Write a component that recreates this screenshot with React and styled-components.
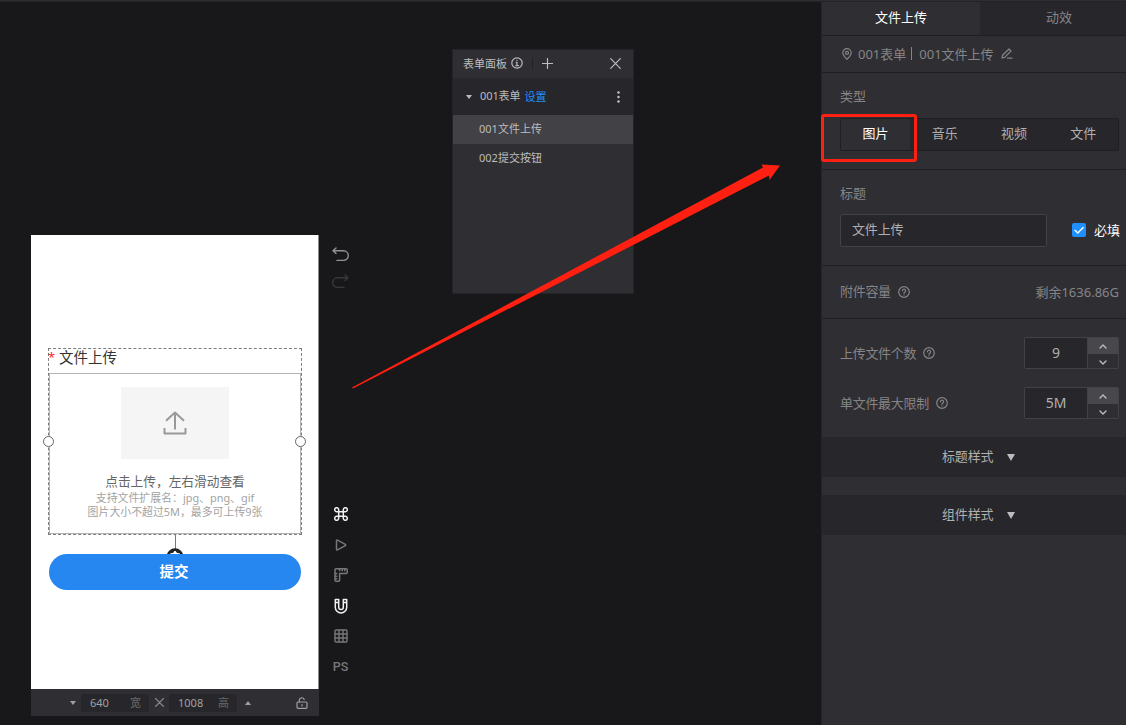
import React from "react";
import styled, { createGlobalStyle } from "styled-components";

const Global = createGlobalStyle`
  * { box-sizing: border-box; }
  html, body { margin: 0; background: #18181a; }
  body { overflow: hidden; font-family: "Noto Sans", "Noto Sans CJK SC", sans-serif; font-size: 13px; line-height: 20px; }
`;

const Page = styled.div`
  position: relative;
  width: 1126px;
  height: 725px;
  display: flex;
  flex-direction: column;
  background: #18181a;
  color: #b0b0b0;
  white-space: nowrap;
`;
const TopBar = styled.div`
  flex: none;
  height: 2px;
  background: linear-gradient(#2f2e33 50%, #232327 50%);
`;
const Workspace = styled.div`
  flex: 1;
  display: flex;
`;
const Stage = styled.main`
  width: 821px;
  display: flex;
  align-items: flex-start;
`;

/* phone preview */
const Preview = styled.section`
  width: 288px;
  margin: 233px 0 0 31px;
`;
const Screen = styled.div`
  height: 454px;
  padding: 113px 16px 0 17px;
  background: #fff;
  border-right: 1px solid #8b8b8b;
`;
const Selection = styled.div`
  position: relative;
  width: 254px;
  height: 187px;
  border: 1px dashed #7d7d7d;
`;
const FieldTitle = styled.div`
  height: 24px;
  font-size: 14.5px;
  line-height: 16px;
  color: #333;
  display: flex;
  gap: 4px;
`;
const Star = styled.span`
  width: 6px;
  margin-left: -1px;
  padding-left: 0;
  color: #ff2a2a;
  font-size: 13px;
`;
const FieldName = styled.span`
  margin-left: 1px;
`;
const UploadBox = styled.div`
  width: 252px;
  height: 161px;
  border: 1px solid #b4b4b4;
  display: flex;
  flex-direction: column;
  align-items: center;
  padding-top: 13px;
`;
const UploadTile = styled.div`
  width: 108px;
  height: 72px;
  padding-right: 1px;
  background: #f5f5f5;
  display: flex;
  align-items: center;
  justify-content: center;
`;
const UploadText = styled.div`
  margin-top: 12px;
  font-size: 12.7px;
  line-height: 20px;
  color: #666;
`;
const Hint = styled.div`
  font-size: 10.9px;
  line-height: 14px;
  color: #a3a3a3;
`;
const Handle = styled.i`
  position: absolute;
  top: 87px;
  ${(p) => (p.$side === "left" ? "left: -6px;" : "right: -5px;")}
  width: 11px;
  height: 11px;
  border: 1px solid #666;
  border-radius: 50%;
  background: #fff;
`;
const Connector = styled.svg`
  display: block;
  margin-left: 117px;
`;
const Submit = styled.div`
  width: 252px;
  height: 36px;
  margin-left: 1px;
  padding-right: 2px;
  border-radius: 18px;
  background: #2787f0;
  color: #fff;
  font-size: 14.5px;
  font-weight: 700;
  line-height: 34px;
  text-align: center;
`;
const SizeBar = styled.footer`
  height: 27px;
  background: #2f2e33;
  display: flex;
  align-items: center;
  padding-left: 39px;
  font-size: 11px;
`;
const SizeBox = styled.div`
  width: 68px;
  height: 18px;
  margin-left: ${(p) => p.$ml || 0}px;
  padding: 0 8px 0 9px;
  background: #27262b;
  border-radius: 2px;
  display: flex;
  justify-content: space-between;
  line-height: 17px;
  color: #a0a0a0;
`;
const Unit = styled.span`
  color: #6a6a6c;
`;
const Times = styled.span`
  width: 20px;
  display: flex;
  justify-content: center;
  color: #858587;
`;
const CaretSlot = styled.span`
  width: 22px;
  display: flex;
  justify-content: center;
`;
const Lock = styled.span`
  margin-left: 37px;
  display: flex;
  color: #a0a0a0;
`;
const Caret = styled.i`
  width: 0;
  height: 0;
  margin-top: ${(p) => p.$mt || 0}px;
  border: ${(p) => p.$size || 3}px solid transparent;
  ${(p) =>
    p.$up
      ? `border-top: 0; border-bottom: 4px solid #a0a0a0;`
      : `border-bottom: 0; border-top: ${p.$h || 4}px solid ${p.$color || "#a0a0a0"};`}
`;

/* vertical tool strip */
const Tools = styled.nav`
  width: 43px;
  padding-top: 244px;
  display: flex;
  flex-direction: column;
  align-items: center;
`;
const Tool = styled.div`
  height: ${(p) => p.$h || 30.5}px;
  margin-top: ${(p) => p.$gap || 0}px;
  display: flex;
  align-items: center;
  justify-content: center;
  color: ${(p) => p.$color || "#77777a"};
  font-family: Roboto, sans-serif;
  font-size: 12.5px;
  font-weight: 500;
`;

/* form panel */
const FormPanel = styled.section`
  width: 182px;
  height: 245px;
  margin: 47px 0 0 90px;
  border: 1px solid #242428;
  background: #2f2e33;
  font-size: 11px;
`;
const PanelHead = styled.header`
  height: 28px;
  padding: 0 12px 2px 10px;
  display: flex;
  align-items: center;
  color: #bdbdbd;
`;
const PanelTitle = styled.span`
  margin-right: 4px;
  padding-top: 1px;
`;
const Divider = styled.i`
  width: 1px;
  height: 11px;
  margin: 0 9px;
  background: #222226;
`;
const Spacer = styled.i`
  flex: 1;
`;
const GroupRow = styled.div`
  height: 37px;
  padding: 0 13px;
  background: #27262b;
  display: flex;
  align-items: center;
  color: #bdbdbd;
`;
const GroupName = styled.span`
  margin: -1px 4px 0 8px;
  letter-spacing: -0.1px;
`;
const SettingLink = styled.span`
  color: #1f8fff;
`;
const Item = styled.div`
  height: 29px;
  padding-left: 26px;
  line-height: 28px;
  color: #bdbdbd;
  background: ${(p) => (p.$active ? "#424146" : "transparent")};
`;

/* inspector */
const Inspector = styled.aside`
  width: 305px;
  border-left: 1px solid #252429;
  background: #2f2e33;
`;
const TabStrip = styled.div`
  overflow: hidden;
  width: 304px;
`;
const Tabs = styled.div`
  height: 34px;
  display: flex;
  border-bottom: 1px solid #1f1f22;
`;
const Tab = styled.div`
  width: 158px;
  flex: none;
  padding-top: 6px;
  text-align: center;
  color: ${(p) => (p.$active ? "#fff" : "#858587")};
  background: ${(p) => (p.$active ? "#2f2e33" : "#27262b")};
`;
const TabLabel = styled.span`
  display: block;
  margin-top: -1px;
`;
const Crumb = styled.div`
  height: 37px;
  padding: 0 0 1px 20px;
  display: flex;
  align-items: center;
  border-bottom: 1px solid #1f1f22;
  color: #858587;
`;
const CrumbText = styled.span`
  margin-left: ${(p) => p.$ml}px;
`;
const CrumbBar = styled.i`
  width: 1px;
  height: 13px;
  margin: 0 7px 0 5px;
  background: #858587;
`;
const Section = styled.section`
  height: ${(p) => p.$h}px;
  padding: ${(p) => p.$pad || "13px 7px 0 18px"};
  border-bottom: ${(p) => (p.$last ? "0" : "1px solid #1f1f22")};
  color: #858587;
`;
const Segments = styled.div`
  width: 279px;
  height: 33px;
  margin-top: 12px;
  display: flex;
  background: #27262b;
  border: 1px solid #1f1f22;
  border-radius: 2px;
`;
const Segment = styled.div`
  width: 69.7px;
  line-height: 29px;
  text-align: center;
  color: ${(p) => (p.$active ? "#fff" : "#b0b0b0")};
  background: ${(p) => (p.$active ? "#2f2e33" : "transparent")};
`;
const Row = styled.div`
  display: flex;
  align-items: center;
  height: ${(p) => p.$h || 33}px;
  margin-top: ${(p) => p.$mt || 0}px;
`;
const Input = styled.div`
  width: 207px;
  height: 33px;
  padding-left: 11px;
  line-height: 29px;
  letter-spacing: -0.15px;
  border: 1px solid #424146;
  border-radius: 2px;
  background: #27262b;
  color: #b0b0b0;
`;
const Checkbox = styled.span`
  width: 14px;
  height: 14px;
  margin: -1px 8px 0 25px;
  border-radius: 2px;
  background: #1f8fff;
  display: flex;
`;
const Required = styled.span`
  margin-top: -2px;
  color: #fff;
`;
const Label = styled.span`
  margin: -1px 7px 0 0;
  letter-spacing: -0.3px;
`;
const Stepper = styled.div`
  width: 95px;
  height: 32px;
  border: 1px solid #424146;
  border-radius: 2px;
  display: flex;
`;
const StepValue = styled.div`
  width: 63px;
  background: #27262b;
  border-right: 1px solid #424146;
  text-align: center;
  line-height: 30px;
  font-size: 14px;
  color: #b0b0b0;
`;
const StepButtons = styled.div`
  flex: 1;
  display: flex;
  flex-direction: column;
`;
const StepButton = styled.div`
  height: ${(p) => (p.$up ? 16 : 14)}px;
  padding-top: ${(p) => (p.$up ? 0 : 3)}px;
  display: flex;
  align-items: center;
  justify-content: center;
  color: #bdbdbd;
  background: ${(p) => (p.$up ? "#48474b" : "transparent")};
`;
const StyleBar = styled.div`
  height: 40px;
  margin-bottom: 18px;
  padding: 0 0 2px 120px;
  display: flex;
  align-items: center;
  gap: 14px;
  background: #27262b;
  color: #b0b0b0;
  letter-spacing: -0.15px;
`;

/* red callout marks */
const Marks = styled.svg`
  position: absolute;
  left: 0;
  top: 0;
`;

const Icon = ({ w = 14, h = w, sw = 1.2, children }) => (
  <svg width={w} height={h} viewBox={`0 0 ${w} ${h}`} fill="none" stroke="currentColor" strokeWidth={sw} strokeLinecap="round" strokeLinejoin="round">
    {children}
  </svg>
);

const Help = () => (
  <Icon w={12}>
    <circle cx="6" cy="6" r="5.3" />
    <path d="M4.4 4.8a1.6 1.6 0 1 1 2.6 1.2c-.6.4-1 .6-1 1.3M6 8.8v.2" />
  </Icon>
);

const NumberField = ({ label, value, mt }) => (
  <Row $h={32} $mt={mt}>
    <Label>{label}</Label>
    <Help />
    <Spacer />
    <Stepper>
      <StepValue>{value}</StepValue>
      <StepButtons>
        <StepButton $up><Icon w={8} h={5} sw={1.4}><path d="M1 4l3-3 3 3" /></Icon></StepButton>
        <StepButton><Icon w={8} h={5} sw={1.4}><path d="M1 1l3 3 3-3" /></Icon></StepButton>
      </StepButtons>
    </Stepper>
  </Row>
);

export default function App() {
  return (
    <Page>
      <Global />
      <TopBar />
      <Workspace>
        <Stage>
          <Preview>
            <Screen>
              <Selection>
                <FieldTitle><Star>*</Star><FieldName>文件上传</FieldName></FieldTitle>
                <UploadBox>
                  <UploadTile>
                    <svg width="24" height="24" viewBox="0 0 24 24" fill="none" stroke="#999" strokeWidth="2" strokeLinejoin="round">
                      <path d="M12 18.500V2M3 9.800l9-8.300 9 8.300M1.500 17v5.500h21V17" />
                    </svg>
                  </UploadTile>
                  <UploadText>点击上传，左右滑动查看</UploadText>
                  <Hint>支持文件扩展名：jpg、png、gif</Hint>
                  <Hint>图片大小不超过5M，最多可上传9张</Hint>
                </UploadBox>
                <Handle $side="left" />
                <Handle $side="right" />
              </Selection>
              <Connector width="20" height="19" viewBox="0 0 20 19">
                <path d="M10.500 0v14" stroke="#777" />
                <circle cx="10" cy="21.500" r="8.300" fill="#222" />
                <path d="M5 19v-.6l3.200-.6L9.400 16h1.200l1.200 1.800 3.200.6v.6z" fill="#fff" />
              </Connector>
              <Submit>提交</Submit>
            </Screen>
            <SizeBar>
              <Caret $mt={1} />
              <SizeBox $ml={5}><span>640</span><Unit>宽</Unit></SizeBox>
              <Times><Icon w={9}><path d="M.5.5l8 8M8.500.5l-8 8" /></Icon></Times>
              <SizeBox><span>1008</span><Unit>高</Unit></SizeBox>
              <CaretSlot><Caret $up /></CaretSlot>
              <Lock>
                <Icon w={12} h={12}>
                  <rect x="1" y="5" width="10" height="6.300" rx="1" />
                  <path d="M3.200 5V3.200a2.600 2.600 0 0 1 5-.8M6 7.600v1.300" />
                </Icon>
              </Lock>
            </SizeBar>
          </Preview>
          <Tools>
            <Tool $h={17} $color="#929294"><Icon w={17} h={15} sw={1.4}><path d="M4 1L1 3.800l3 2.700M1.200 3.800h10.300a4.600 4.600 0 0 1 0 9.600H5" /></Icon></Tool>
            <Tool $h={17} $gap={10} $color="#38383b"><Icon w={17} h={15} sw={1.4}><path d="M13 1l3 2.800-3 2.700M15.800 3.800H5.500a4.600 4.600 0 0 0 0 9.600H12" /></Icon></Tool>
            <Tool $gap={209} $color="#f2f2f2">
              <Icon w={14} sw={1.5}><path d="M4.700 4.700H2.900a2 2 0 1 1 1.800-2v8.600a2 2 0 1 1-1.800-2h8.200a2 2 0 1 1-1.800 2V2.700a2 2 0 1 1 1.800 2z" /></Icon>
            </Tool>
            <Tool><Icon w={12} sw={1.5}><path d="M1.500 1.800v8.400q0 1.200 1 .7l7.800-4.200q.8-.7 0-1.400L2.500 1.100q-1-.5-1 .7z" /></Icon></Tool>
            <Tool>
              <Icon w={14} sw={1.500}><path d="M2 .8h10.200q1 0 1 1v2.700q0 1-1 1H5.600v6.700q0 1-1 1H2q-1 0-1-1V1.800q0-1 1-1zM5.600 1v1.700M8.200 1v1.700M10.800 1v1.700M1 5.600h1.700M1 8.200h1.700M1 10.800h1.700" /></Icon>
            </Tool>
            <Tool $color="#f2f2f2">
              <Icon w={14} h={16} sw={1.500}><path d="M1.300 1.500h3.400v7.800a2.300 2.300 0 0 0 4.600 0V1.500h3.400v7.800a5.700 5.700 0 0 1-11.400 0zM1.300 4.500h3.400M9.300 4.500h3.400" /></Icon>
            </Tool>
            <Tool><Icon w={14} sw={1.400}><rect x="1" y="1" width="12" height="12" rx="1" /><path d="M5 1v12M9 1v12M1 5h12M1 9h12" /></Icon></Tool>
            <Tool>PS</Tool>
          </Tools>
          <FormPanel>
            <PanelHead>
              <PanelTitle>表单面板</PanelTitle>
              <Icon w={12}><circle cx="6" cy="6" r="5.200" /><path d="M5.200 5.400H6v3M4.900 8.700h2.400M6 3.300v.2" /></Icon>
              <Divider />
              <Icon w={11}><path d="M5.500.5v10M.5 5.500h10" /></Icon>
              <Spacer />
              <Icon w={11}><path d="M.7.7l9.600 9.600M10.300.7L.7 10.300" /></Icon>
            </PanelHead>
            <GroupRow>
              <Caret $color="#bdbdbd" $mt={1} />
              <GroupName>001表单</GroupName>
              <SettingLink>设置</SettingLink>
              <Spacer />
              <svg width="3" height="12" viewBox="0 0 3 12" fill="#c8c8c8"><circle cx="1.500" cy="1.500" r="1.200" /><circle cx="1.500" cy="6" r="1.200" /><circle cx="1.500" cy="10.500" r="1.200" /></svg>
            </GroupRow>
            <Item $active>001文件上传</Item>
            <Item>002提交按钮</Item>
          </FormPanel>
        </Stage>
        <Inspector>
          <TabStrip>
            <Tabs>
              <Tab $active><TabLabel>文件上传</TabLabel></Tab>
              <Tab><TabLabel>动效</TabLabel></Tab>
            </Tabs>
          </TabStrip>
          <Crumb>
            <Icon w={10} h={12}><path d="M5 11.400C3 9.200.8 7.300.8 4.800a4.200 4.200 0 0 1 8.400 0C9.200 7.300 7 9.200 5 11.400z" /><circle cx="5" cy="4.900" r="1.500" /></Icon>
            <CrumbText $ml={6}>001表单</CrumbText>
            <CrumbBar />
            <CrumbText $ml={0}>001文件上传</CrumbText>
            <CrumbText $ml={7}><Icon w={12} h={11}><path d="M1 10l.5-2.700L8 1l2 2-6.300 6.400zM6.500 10.200h4.500" /></Icon></CrumbText>
          </Crumb>
          <Section $h={97}>
            类型
            <Segments>
              <Segment $active>图片</Segment>
              <Segment>音乐</Segment>
              <Segment>视频</Segment>
              <Segment>文件</Segment>
            </Segments>
          </Section>
          <Section $h={96} $pad="13px 0 0 18px">
            标题
            <Row $mt={11}>
              <Input>文件上传</Input>
              <Checkbox><Icon w={14} sw={1.400}><path d="M3 7.200l2.800 2.800L11.200 4.400" stroke="#fff" /></Icon></Checkbox>
              <Required>必填</Required>
            </Row>
          </Section>
          <Section $h={53} $pad="9px 7px 0 18px">
            <Row><Label>附件容量</Label><Help /><Spacer />剩余1636.86G</Row>
          </Section>
          <Section $h={118} $last $pad="18px 7px 0 18px">
            <NumberField label="上传文件个数" value="9" />
            <NumberField label="单文件最大限制" value="5M" mt={18} />
          </Section>
          <StyleBar>标题样式<Caret $size={4.5} $h={7} $mt={3} $color="#bdbdbd" /></StyleBar>
          <StyleBar>组件样式<Caret $size={4.5} $h={7} $mt={3} $color="#bdbdbd" /></StyleBar>
        </Inspector>
      </Workspace>
      <Marks width="1126" height="725" viewBox="0 0 1126 725">
        <path d="M352 387.500L763 167.500L761.500 164.500L780 165.500L769.500 180L769 175.500L353 388.500z" fill="#ff2012" />
        <rect x="822.500" y="115.500" width="93" height="45" rx="1.500" fill="none" stroke="#ff2012" strokeWidth="3" />
      </Marks>
    </Page>
  );
}
